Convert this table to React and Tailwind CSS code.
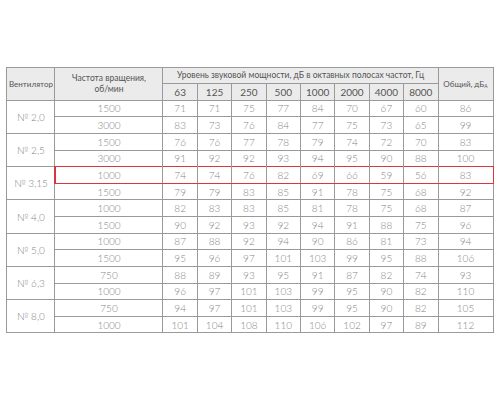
import React from "react";

const freqs = ["63", "125", "250", "500", "1000", "2000", "4000", "8000"];

const fans = [
  { name: "№ 2,0", rows: [["1500", 71, 71, 75, 77, 84, 70, 67, 60, 86], ["3000", 83, 73, 76, 84, 77, 75, 73, 65, 99]] },
  { name: "№ 2,5", rows: [["1500", 76, 76, 77, 78, 79, 74, 72, 70, 83], ["3000", 91, 92, 92, 93, 94, 95, 90, 88, 100]] },
  { name: "№ 3,15", rows: [["1000", 74, 74, 76, 82, 69, 66, 59, 56, 83], ["1500", 79, 79, 83, 85, 91, 78, 75, 68, 92]] },
  { name: "№ 4,0", rows: [["1000", 82, 83, 83, 85, 81, 78, 75, 68, 87], ["1500", 90, 92, 93, 92, 94, 91, 88, 75, 96]] },
  { name: "№ 5,0", rows: [["1000", 87, 88, 92, 94, 90, 86, 81, 73, 94], ["1500", 95, 96, 97, 101, 103, 99, 95, 88, 106]] },
  { name: "№ 6,3", rows: [["750", 88, 89, 93, 95, 91, 87, 82, 74, 93], ["1000", 96, 97, 101, 103, 99, 95, 90, 82, 110]] },
  { name: "№ 8,0", rows: [["750", 94, 97, 101, 103, 99, 95, 90, 82, 105], ["1000", 101, 104, 108, 110, 106, 102, 97, 89, 112]] },
];

const cell = "border border-[#9a9a9a] text-center align-middle p-0";
const head = cell + " bg-[#ebebeb] text-[#555] font-normal whitespace-nowrap";

export default function App() {
  return (
    <div
      className="w-[500px] h-[400px] bg-white flex items-center justify-center"
      style={{ fontFamily: '"Lato", "Noto Sans", sans-serif' }}
    >
      <table className="w-[486px] border-collapse table-fixed text-[9.5px] leading-none">
        <colgroup>
          <col className="w-[48px]" />
          <col className="w-[108px]" />
          {freqs.map((f) => (
            <col key={f} className="w-[34.375px]" />
          ))}
          <col className="w-[55px]" />
        </colgroup>
        <thead>
          <tr className="h-[16.5px]">
            <th rowSpan={2} className={head + " text-[8px]"}>Вентилятор</th>
            <th rowSpan={2} className={head + " text-[8.5px] leading-[11px]"}>
              Частота вращения,
              <br />
              об/мин
            </th>
            <th colSpan={8} className={head + " text-[8.5px]"}>
              Уровень звуковой мощности, дБ в октавных полосах частот, Гц
            </th>
            <th rowSpan={2} className={head + " text-[8px]"}>
              Общий, дБ<sub className="text-[5px]">А</sub>
            </th>
          </tr>
          <tr className="h-[16.5px]">
            {freqs.map((f) => (
              <th key={f} className={head + " text-[10px]"}>{f}</th>
            ))}
          </tr>
        </thead>
        <tbody className="text-[#858585] text-[10px] font-light">
          {fans.map((fan, fi) =>
            fan.rows.map((row, ri) => {
              const red = fi === 2 && ri === 0;
              const aboveRed = fi === 1 && ri === 1;
              return (
                <tr key={fan.name + ri} className="h-[16.64px]">
                  {ri === 0 && (
                    <td rowSpan={2} className={cell}>{fan.name}</td>
                  )}
                  {row.map((v, ci) => {
                    let cls = cell;
                    if (red) {
                      cls += " border-y-[#d9363e] border-double";
                      if (ci === 0) cls += " border-l-[#d9363e] shadow-[inset_1px_0_0_#d9363e]";
                      if (ci === row.length - 1) cls += " border-r-[#d9363e]";
                    }
                    if (aboveRed) cls += " border-b-[#d9363e] border-b-double";
                    return (
                      <td key={ci} className={cls}>{v}</td>
                    );
                  })}
                </tr>
              );
            })
          )}
        </tbody>
      </table>
    </div>
  );
}
